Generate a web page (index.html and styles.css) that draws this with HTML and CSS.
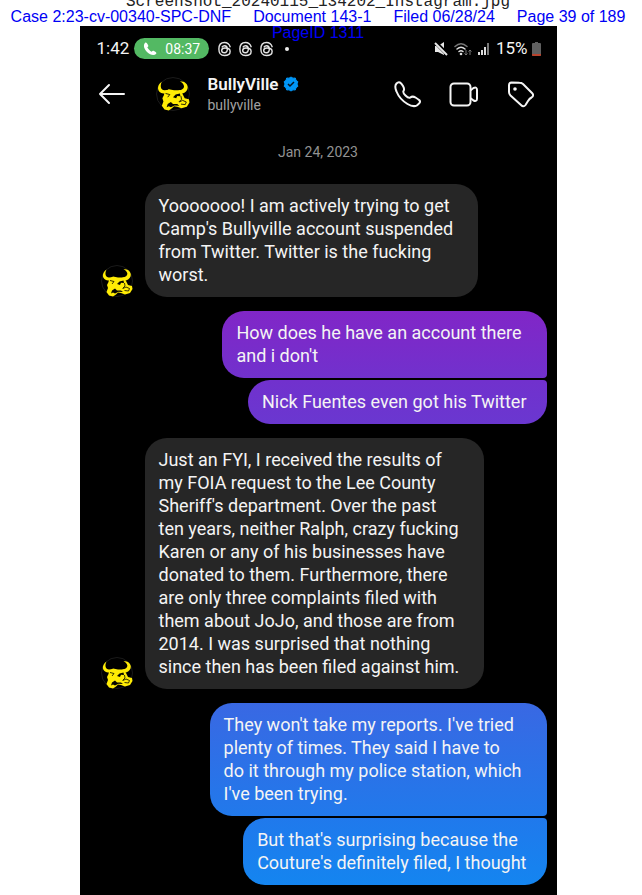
FILE: index.html
```html
<!DOCTYPE html>
<html lang="en">
<head>
  <meta charset="UTF-8">
  <title>BullyVille</title>
  <meta name="viewport" content="width=device-width, initial-scale=1.0">
  <link rel="stylesheet" href="styles.css">
</head>
<body>
  <svg class="defs" width="0" height="0" aria-hidden="true">
    <symbol id="bull" viewBox="0 0 32 32">
      <circle cx="16" cy="16" r="15.500" fill="#000" stroke="#252525" stroke-width=".7"/>
      <!-- horns -->
      <path fill="#ffec05" d="M5.500 4.500C0 8 1 15 7 15.500L13 14.500 12.500 12 8 12.500C4.500 12.500 3.500 8.500 5.500 4.500Z"/>
      <path fill="#ffec05" d="M22.500 4C31 4 32.500 13 25 15.500L20.500 14.500 21.500 12.500C27 12 28.500 7.500 22.500 4Z"/>
      <!-- head and jaw -->
      <path fill="#ffec05" d="M8 14 12 11.500 17 12.500 23 12.500 25 16 27 20 31 21 31.500 24 29 28 24 29.500 20 28 17 27.500 15 29.500 12 31.500 8 30.500 5.500 27 7 23 6 20 7.500 17Z"/>
      <path fill="#060600" d="M16 19 18.500 16.500 22.500 15.500 23 18 20 17.800 19 20ZM10 28.500 11 25.500 14 23.500 16 25.500 20 25.500 22 27 17.500 26.800 14 28.500 12 27.500Z"/>
      <path fill="none" stroke="#060600" stroke-width=".8" d="M9 15.500 13 16.500 11 19M23.500 18 24 21 21.500 23.500M22 23.500 25 22 28.500 23.500 27.500 26 23.500 25.500"/>
    </symbol>
    <symbol id="threads" viewBox="0 0 16 16">
      <path fill="none" stroke="#e4e4e4" stroke-width="1.500" stroke-linecap="round" d="M14 5.500C13 2.500 11 1 8 1 4 1 2 4 2 8s2 7 6 7c4 0 6-2 6-4.300C14 8 11 7 8.500 7 6 7 5 8 5 9.500S6.500 12 8 12c2.500 0 3-2 3-4C11 5.500 9.500 4.500 8 4.500c-1.300 0-2 .5-2.500 1.300"/>
    </symbol>
  </svg>

  <div class="page">
    <div class="filename">Screenshot_20240115_134202_Instagram.jpg</div>
    <div class="stamp">
      <span>Case 2:23-cv-00340-SPC-DNF</span>
      <span>Document 143-1</span>
      <span>Filed 06/28/24</span>
      <span>Page 39 of 189</span>
      <span class="page-id">PageID 1311</span>
    </div>

    <main class="phone">
      <div class="status">
        <span class="time">1:42</span>
        <span class="call">
          <svg width="14" height="14" viewBox="0 0 14 14"><path fill="#fff" d="M2 1C0 3 1 7 4 10s7 4 9 2c1-1 0-2-2-3-1-.5-1.500-.3-2.300.7C7 9 5 7 4.300 5.300 5.500 4.500 5.600 4 5 3 4 1 3 0 2 1Z"/></svg>
          08:37
        </span>
        <span class="notices">
          <svg width="15" height="16"><use href="#threads"/></svg>
          <svg width="15" height="16"><use href="#threads"/></svg>
          <svg width="15" height="16"><use href="#threads"/></svg>
        </span>
        <span class="dot"></span>
        <span class="signals">
          <svg width="14" height="14" viewBox="0 0 14 14"><path fill="#e8e8e8" d="M1 4H4L10 0V13L4 10H1Z"/><path stroke="#000" stroke-width="4" d="M1 0 14 13"/><path stroke="#e8e8e8" stroke-width="2" d="M1 1 13 13"/></svg>
          <svg width="18" height="14" viewBox="0 0 18 14"><g fill="none" stroke="#ddd" stroke-width="1.500" stroke-linecap="round"><path stroke="#777" d="M1 4.500Q7 -1 13 4.500"/><path d="M3 7Q7 3.500 11 7M5 9.500Q7 8 9 9.500"/></g><circle cx="7" cy="12" r="1.300" fill="#ddd"/><path fill="none" stroke="#777" d="M12 8v5m-1.500-1.500L12 13l1.500-1.500M16 13V8m-1.500 1.500L16 8l1.500 1.500"/></svg>
          <svg width="12" height="13" viewBox="0 0 12 13"><path fill="#ddd" d="M0 10h2v3H0zM3 8h2v5H3zM6 5h2v8H6z"/><path fill="#777" d="M9 1h2v12H9z"/></svg>
        </span>
        <span class="time">15%</span>
        <svg width="9" height="14" viewBox="0 0 9 14"><path fill="#606060" d="M3 0h3v1h2q1 0 1 1v11q0 1-1 1H1q-1 0-1-1V2q0-1 1-1h2z"/><path fill="#b8432d" d="M0 12h9v1q0 1-1 1H1q-1 0-1-1z"/></svg>
      </div>

      <header class="top">
        <button class="icon" aria-label="Back">
          <svg width="28" height="22" viewBox="0 0 28 22"><path d="M26 11H2M11 2 2 11l9 9"/></svg>
        </button>
        <svg class="avatar" width="34" height="34"><use href="#bull"/></svg>
        <div class="who">
          <h1>BullyVille
            <svg width="16" height="16" viewBox="0 0 16 16"><path fill="#0095f6" stroke="#0095f6" stroke-linejoin="round" d="m8 1 2 1.200 2.300-.2.700 2.300 1.900 1.400L14 8l.9 2.300-1.900 1.400-.7 2.300-2.300-.2L8 15l-2-1.200-2.300.2-.7-2.300-1.900-1.400L2 8l-.9-2.300L3 4.300 3.700 2l2.300.2z"/><path fill="none" stroke="#06131f" stroke-width="1.500" d="m5 8 2 2 4-4"/></svg>
          </h1>
          <a href="#">bullyville</a>
        </div>
        <div class="actions">
          <button class="icon" aria-label="Audio call">
            <svg width="27" height="27" viewBox="0 0 27 27"><path d="M2.500 2.500C5 0 7 1.500 9 5c1.500 2.500 1.500 3.500.5 5-.7 1.200 0 2.500 2 4.500s3.500 3 4.800 2c1.700-1.300 3-1.300 5.200 0 3.500 2 5.500 3.500 4 5.500-2.500 3.500-7 4-12 1C8.500 20 4.500 15.500 2.500 10.500 1 7 .8 4.300 2.500 2.500Z"/></svg>
          </button>
          <button class="icon" aria-label="Video call">
            <svg width="30" height="25" viewBox="0 0 30 25"><rect x="1.500" y="1.500" width="20" height="22" rx="3.500"/><path d="M22 8 24.500 6Q28 4.500 28 8v8.500q0 3.500-3.500 2L22 16.500"/></svg>
          </button>
          <button class="icon" aria-label="Label">
            <svg width="27" height="27" viewBox="0 0 27 27"><path d="M2 4q0-2.500 2.500-2.500l8 .3q2 0 3.500 1.200l4 4 5 5q2.500 2.500-.5 4.500-2 1-3.500 3.500l-2.500 4q-2 2.500-4.500 0L3.500 14.500Q2 13 2 11Z"/><circle class="hole" cx="8" cy="8" r="1.800"/></svg>
          </button>
        </div>
      </header>

      <time class="date">Jan 24, 2023</time>

      <section class="chat">
        <div class="row">
          <svg class="avatar" width="32" height="32"><use href="#bull"/></svg>
          <p class="bubble">Yooooooo! I am actively trying to get<br>Camp's Bullyville account suspended<br>from Twitter. Twitter is the fucking<br>worst.</p>
        </div>

        <div class="mine">
          <p class="bubble first purple">How does he have an account there<br>and i don't</p>
          <p class="bubble last violet">Nick Fuentes even got his Twitter</p>
        </div>

        <div class="row">
          <svg class="avatar" width="32" height="32"><use href="#bull"/></svg>
          <p class="bubble">Just an FYI, I received the results of<br>my FOIA request to the Lee County<br>Sheriff's department. Over the past<br>ten years, neither Ralph, crazy fucking<br>Karen or any of his businesses have<br>donated to them. Furthermore, there<br>are only three complaints filed with<br>them about JoJo, and those are from<br>2014. I was surprised that nothing<br>since then has been filed against him.</p>
        </div>

        <div class="mine">
          <p class="bubble first indigo">They won't take my reports. I've tried<br>plenty of times. They said I have to<br>do it through my police station, which<br>I've been trying.</p>
          <p class="bubble last blue">But that's surprising because the<br>Couture's definitely filed, I thought</p>
        </div>
      </section>
    </main>
  </div>
</body>
</html>
```
FILE: styles.css
```css
* {
  box-sizing: border-box;
}
body {
  margin: 0;
  background: #fff;
  font-family: Roboto, "Liberation Sans", sans-serif;
}
.defs {
  position: absolute;
}
.page {
  display: flex;
  flex-direction: column;
  align-items: center;
  min-height: 100vh;
  padding-right: 6px;
}
.filename {
  display: flex;
  align-items: flex-end;
  height: 9px;
  font: 16px/14px "Liberation Mono", monospace;
  color: #222;
}
.stamp {
  position: relative;
  display: flex;
  justify-content: center;
  gap: 22px;
  width: 100%;
  padding-bottom: 1px;
  font: 16px/16px "Liberation Sans", sans-serif;
  color: #0000f5;
  white-space: nowrap;
}
/* second line of the stamp runs over the top of the phone */
.page-id {
  position: absolute;
  top: 16px;
  left: 0;
  right: 0;
  text-align: center;
}
.phone {
  flex: 1;
  width: 75%;
  background: #000;
  color: #f4f4f4;
}
.status {
  display: flex;
  align-items: center;
  padding: 12px 16px 0 17px;
}
.time {
  font-size: 17px;
  line-height: 21px;
}
.call {
  display: flex;
  align-items: center;
  gap: 8px;
  height: 21px;
  margin-left: 5px;
  padding: 0 9px;
  border-radius: 11px;
  background: #53b963;
  font-size: 14px;
  color: #fff;
}
.notices {
  display: flex;
  gap: 6px;
  margin-left: 8px;
}
.dot {
  width: 4px;
  height: 4px;
  margin-left: 11px;
  border-radius: 50%;
  background: #eee;
}
.signals {
  display: flex;
  align-items: center;
  gap: 6px;
  margin: 0 6px 0 auto;
}
.status > svg {
  margin-left: 4px;
}
.top {
  display: flex;
  align-items: center;
  height: 70px;
  padding: 0 23px 0 18px;
}
.icon {
  display: flex;
  padding: 0;
  border: 0;
  background: none;
}
.icon svg {
  fill: none;
  stroke: #f5f5f5;
  stroke-width: 2;
  stroke-linecap: round;
  stroke-linejoin: round;
}
.icon .hole {
  fill: #f5f5f5;
  stroke: none;
}
.top .avatar {
  margin-left: 30px;
}
.who {
  margin-left: 18px;
}
.who h1 {
  display: flex;
  align-items: center;
  gap: 4px;
  margin: 0;
  font-size: 17px;
  font-weight: 600;
  line-height: 21px;
}
.who a {
  display: block;
  font-size: 14px;
  line-height: 20px;
  color: #a0a0a0;
  text-decoration: none;
}
.actions {
  display: flex;
  align-items: center;
  gap: 28px;
  margin-left: auto;
}
.date {
  display: block;
  padding-top: 13px;
  font-size: 14px;
  line-height: 20px;
  text-align: center;
  color: #929292;
}
.chat {
  display: flex;
  flex-direction: column;
  gap: 14px;
  padding: 22px 10px 9px 21px;
}
.row {
  display: flex;
  align-items: flex-end;
  gap: 12px;
}
.avatar {
  flex: none;
}
.mine {
  display: flex;
  flex-direction: column;
  align-items: flex-end;
  gap: 2px;
}
.bubble {
  margin: 0;
  padding: 10px 25px 11px 14px;
  border-radius: 22px;
  background: #262626;
  font-size: 18px;
  line-height: 23px;
}
.first {
  border-bottom-right-radius: 4px;
}
.last {
  padding-right: 20px;
  border-top-right-radius: 4px;
}
.purple {
  background: linear-gradient(#8126c7, #7131cd);
}
.violet {
  background: linear-gradient(#7131cd, #6a37d0);
}
.indigo {
  background: linear-gradient(#3968e3, #2179eb);
}
.blue {
  background: linear-gradient(#2079ec, #1485f0);
}
```
